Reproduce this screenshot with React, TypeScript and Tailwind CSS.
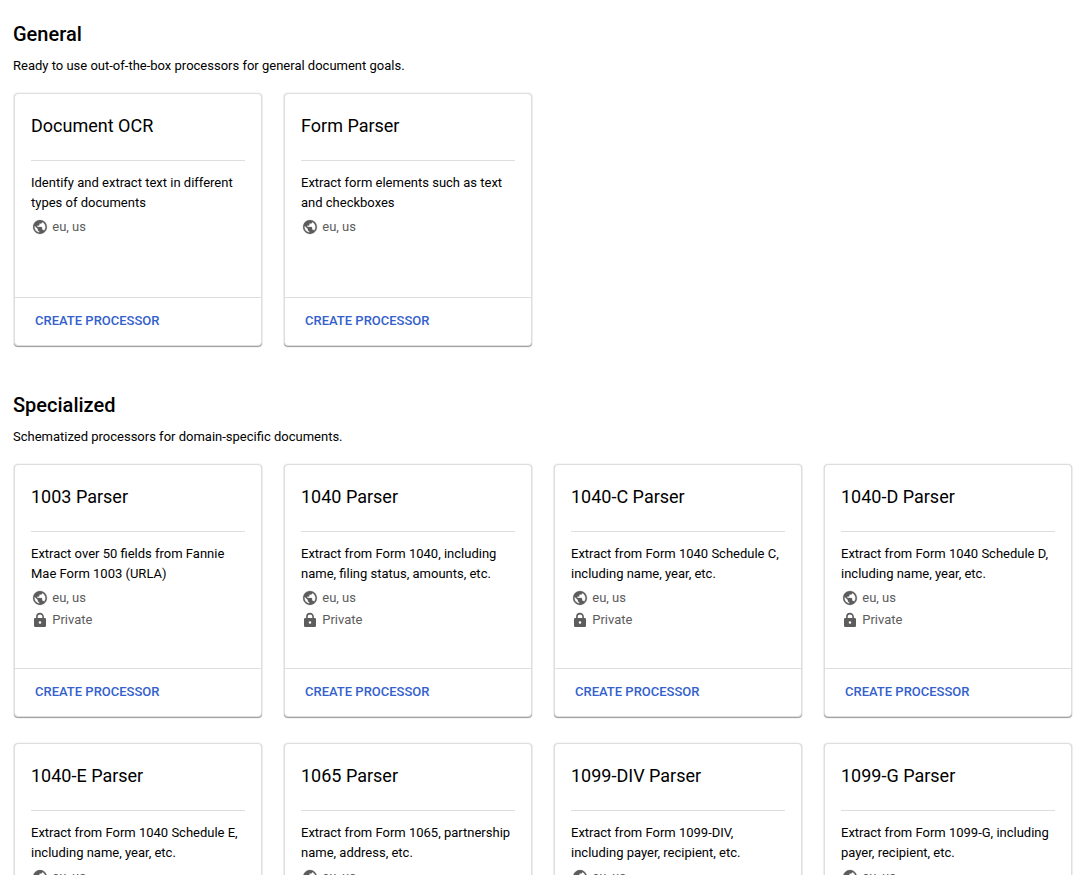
type Processor = { title: string; lines: [string, string]; isPrivate?: boolean };

const general: Processor[] = [
  { title: "Document OCR", lines: ["Identify and extract text in different", "types of documents"] },
  { title: "Form Parser", lines: ["Extract form elements such as text", "and checkboxes"] },
];

const specialized: Processor[] = [
  { title: "1003 Parser", lines: ["Extract over 50 fields from Fannie", "Mae Form 1003 (URLA)"], isPrivate: true },
  { title: "1040 Parser", lines: ["Extract from Form 1040, including", "name, filing status, amounts, etc."], isPrivate: true },
  { title: "1040-C Parser", lines: ["Extract from Form 1040 Schedule C,", "including name, year, etc."], isPrivate: true },
  { title: "1040-D Parser", lines: ["Extract from Form 1040 Schedule D,", "including name, year, etc."], isPrivate: true },
  { title: "1040-E Parser", lines: ["Extract from Form 1040 Schedule E,", "including name, year, etc."], isPrivate: true },
  { title: "1065 Parser", lines: ["Extract from Form 1065, partnership", "name, address, etc."], isPrivate: true },
  { title: "1099-DIV Parser", lines: ["Extract from Form 1099-DIV,", "including payer, recipient, etc."], isPrivate: true },
  { title: "1099-G Parser", lines: ["Extract from Form 1099-G, including", "payer, recipient, etc."], isPrivate: true },
];

function GlobeIcon() {
  return (
    <svg viewBox="0.4 0.4 23.2 23.2" className="size-4 shrink-0" fill="currentColor" stroke="currentColor" strokeWidth="0.35">
      <path d="M12 2C6.48 2 2 6.48 2 12s4.48 10 10 10 10-4.48 10-10S17.52 2 12 2zm-1 17.93c-3.95-.49-7-3.85-7-7.93 0-.62.08-1.21.21-1.79L9 15v1c0 1.1.9 2 2 2v1.93zm6.9-2.54c-.26-.81-1-1.39-1.9-1.39h-1v-3c0-.55-.45-1-1-1H8v-2h2c.55 0 1-.45 1-1V7h2c1.1 0 2-.9 2-2v-.41c2.93 1.19 5 4.06 5 7.41 0 2.08-.8 3.97-2.1 5.39z" />
    </svg>
  );
}

function LockIcon() {
  return (
    <svg viewBox="0 0 16 16" className="size-4 shrink-0" fill="none">
      <path d="M4.9 7V4.7a3.1 3.1 0 0 1 6.2 0V7" stroke="currentColor" strokeWidth="1.6" />
      <path
        fill="currentColor"
        fillRule="evenodd"
        d="M3.3 6h9.4A1.3 1.3 0 0 1 14 7.3v6.4a1.3 1.3 0 0 1-1.3 1.3H3.3A1.3 1.3 0 0 1 2 13.7V7.3A1.3 1.3 0 0 1 3.3 6ZM8 9.2a1.3 1.3 0 1 0 0 2.6 1.3 1.3 0 0 0 0-2.6Z"
      />
    </svg>
  );
}

function Card({ title, lines, isPrivate }: Processor) {
  return (
    <article className="flex h-[253px] w-[248px] flex-col rounded-[4px] border border-[#dedede] bg-white shadow-[0_1px_1px_rgba(0,0,0,0.38),0_0_2px_rgba(0,0,0,0.12)]">
      <div className="flex-1 px-4">
        <h2 className="h-[67px] border-b border-[#dedede] pt-5 text-lg leading-6">{title}</h2>
        <p className="mt-3 whitespace-nowrap text-[13px] leading-5">
          {lines[0]}
          <br />
          {lines[1]}
        </p>
        <div className="mt-[3px] flex h-[22px] items-center gap-[4.25px] pl-px text-[13px] text-[#5c5c5c]">
          <GlobeIcon />
          <span>eu, us</span>
        </div>
        {isPrivate && (
          <div className="flex h-[22px] items-center gap-[4.25px] pl-px text-[13px] text-[#5c5c5c]">
            <LockIcon />
            <span>Private</span>
          </div>
        )}
      </div>
      <div className="flex h-[48px] items-center border-t border-[#dedede] pb-px pl-5">
        <button className="text-[13px] font-medium text-[#3360cc]">CREATE PROCESSOR</button>
      </div>
    </article>
  );
}

function Section({ title, subtitle, items }: { title: string; subtitle: string; items: Processor[] }) {
  return (
    <section>
      <h1 className="text-xl font-medium leading-7">{title}</h1>
      <p className="mt-2 text-[13px] leading-5">{subtitle}</p>
      <div className="ml-px mt-[17px] grid grid-cols-[repeat(4,248px)] gap-x-[22px] gap-y-[26px]">
        {items.map((item) => (
          <Card key={item.title} {...item} />
        ))}
      </div>
    </section>
  );
}

export default function App() {
  return (
    <main className="flex h-[875px] flex-col gap-[45px] overflow-hidden bg-white pl-[13px] pt-5 font-[Roboto,sans-serif] text-black">
      <Section title="General" subtitle="Ready to use out-of-the-box processors for general document goals." items={general} />
      <Section title="Specialized" subtitle="Schematized processors for domain-specific documents." items={specialized} />
    </main>
  );
}
